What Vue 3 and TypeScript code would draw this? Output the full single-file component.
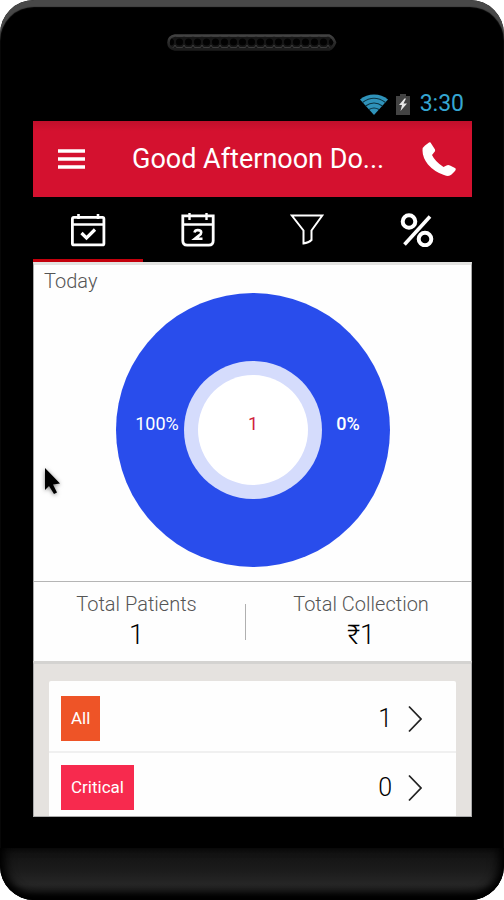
<script setup lang="ts">
import { ref } from 'vue'

interface Row {
  label: string
  count: number
  tone: string
}

const tabs = ['Today', 'Calendar', 'Filter', 'Percentage']
const active = ref(0)

const stats = [
  { label: 'Total Patients', value: '1' },
  { label: 'Total Collection', value: '₹1' },
]

const rows: Row[] = [
  { label: 'All', count: 1, tone: 'orange' },
  { label: 'Critical', count: 0, tone: 'pink' },
]
</script>

<template>
  <div class="phone">
    <div class="top">
      <svg class="speaker" viewBox="0 0 170 17" width="170" height="17" aria-hidden="true">
        <defs>
          <pattern id="mesh" x="8" y="3" width="9" height="11" patternUnits="userSpaceOnUse">
            <rect width="9" height="11" fill="#161616" />
            <circle cx="4.5" cy="5" r="3.6" fill="#020202" />
            <path d="M0 8l1.500 2.500h6L9 8" fill="none" stroke="#3c3c3c" />
          </pattern>
          <linearGradient id="rim" x1="0" y1="0" x2="0" y2="1">
            <stop offset="0" stop-color="#424242" />
            <stop offset="0.5" stop-color="#2c2c2c" />
            <stop offset="1" stop-color="#1c1c1c" />
          </linearGradient>
        </defs>
        <path d="M8 1.500h154Q166 3 168 8.500 166 14 162 15.500H8Q1.500 14.500 1.500 8.500T8 1.500z" fill="url(#mesh)" stroke="url(#rim)" stroke-width="2.600" />
      </svg>
      <div class="status">
        <svg width="28" height="21" viewBox="0 0 28 21" aria-hidden="true">
          <path d="M14 21L0 5.500Q6 .5 14 .5t14 5z" fill="#2f93ba" />
          <path d="M2.500 8.500q11.500-8.500 23 0M5.500 12q8.500-6 17 0M9 15.500q5-3 10 0" fill="none" stroke="#0c3443" stroke-width="1.100" />
        </svg>
        <svg width="14" height="21" viewBox="0 0 14 21" aria-hidden="true">
          <path d="M4 0h6v2h4v19H0V2h4z" fill="#434343" />
          <path d="M8.500 4.500L3 11h3l-1.500 6L11 9.500H7.500l2.500-5z" fill="#e8e8e8" />
        </svg>
        <span class="time">3:30</span>
      </div>
    </div>

    <main class="screen">
      <header class="bar">
        <button type="button" class="icon" aria-label="Menu">
          <svg width="27" height="20" viewBox="0 0 27 20"><path d="M0 2h27M0 10h27M0 18h27" stroke="#fff" stroke-width="3.600" /></svg>
        </button>
        <h1>Good Afternoon Do...</h1>
        <button type="button" class="icon" aria-label="Call">
          <svg width="34" height="35" viewBox="0 0 34 35">
            <path d="M8.500.5L13 7.500Q13.500 9 12 10.500L10 13Q13 19.500 21.500 25L24.500 23.500Q26 22.500 28 23.500L33 26Q34.500 27 33 29L29.500 32.500Q27 35 22 33Q12.500 30 6 22.500Q.5 15.500.5 8.500Q.5 5 3 3.500L7 .5Q8-.2 8.500.5z" fill="#fff" />
          </svg>
        </button>
      </header>

      <nav class="tabs">
        <button
          v-for="(tab, i) in tabs"
          :key="tab"
          type="button"
          :class="{ active: active === i }"
          :aria-label="tab"
          @click="active = i"
        >
          <svg v-if="i === 0" width="36" height="34" viewBox="0 0 36 34" fill="none" stroke="#fff" stroke-width="2.800">
            <rect x="2.400" y="4.400" width="31.500" height="27.500" rx="1.500" />
            <path d="M2 11.500h32M8.500 1v5M28 1v5" stroke-width="2.600" />
            <path d="M11.500 20l5 5L25 16.500" stroke-width="3.200" />
          </svg>
          <svg v-else-if="i === 1" width="34" height="34" viewBox="0 0 34 34" fill="none" stroke="#fff" stroke-width="2.800">
            <path d="M1.800 2.800h30.400v25q0 4.400-4.400 4.400H6.200q-4.400 0-4.400-4.400z" />
            <path d="M2 11.500h30M8.500 0v7M25.500 0v7" stroke-width="2.400" />
            <path d="M13.500 19.500q.5-2.400 3.300-2.400 3.400 0 3.400 2.300 0 1.500-2 3l-4.200 3.300h7.500" stroke-width="2.600" />
          </svg>
          <svg v-else-if="i === 2" width="34" height="34" viewBox="0 0 34 34" fill="none" stroke="#fff" stroke-width="2">
            <path d="M1.800 2.500h30.500L21.500 17.500V27q-3 3-8 3.500v-13z" />
          </svg>
          <svg v-else width="34" height="34" viewBox="0 0 34 34" fill="none" stroke="#fff" stroke-width="4">
            <circle cx="9" cy="8.500" r="6.300" />
            <circle cx="25" cy="26" r="6.300" />
            <path d="M30 3.500L4.500 31.500" stroke-width="3.600" />
          </svg>
        </button>
      </nav>

      <section class="chart">
        <h2>Today</h2>
        <svg class="donut" viewBox="0 0 274 274" width="274" height="274" role="img" aria-label="Patients today">
          <circle cx="137" cy="137" r="137" fill="#294dec" />
          <circle cx="137" cy="137" r="69" fill="#d5dcfc" />
          <circle cx="137" cy="137" r="55" fill="#fff" />
          <text x="41" y="137" text-anchor="middle" fill="#fff">100%</text>
          <text x="137" y="137" text-anchor="middle" fill="#d0223c">1</text>
          <text x="232" y="137" text-anchor="middle" fill="#fff" class="strong">0%</text>
        </svg>
        <svg class="pointer" width="24" height="34" viewBox="0 0 24 34" aria-hidden="true">
          <path d="M2 1v22l4-4 5 8 3-1.500-4-8 7-1z" fill="#000" />
        </svg>
      </section>

      <section class="stats">
        <div v-for="s in stats" :key="s.label" class="stat">
          <span class="name">{{ s.label }}</span>
          <span class="value">{{ s.value }}</span>
        </div>
      </section>

      <section class="lists">
        <ul>
          <li v-for="row in rows" :key="row.label">
            <a href="#">
              <span class="badge" :class="row.tone">{{ row.label }}</span>
              <span class="count">{{ row.count }}</span>
              <svg width="14" height="28" viewBox="0 0 14 28" aria-hidden="true">
                <path d="M1 1.500L13 14 1 26.500" fill="none" stroke="#222" stroke-width="1.800" />
              </svg>
            </a>
          </li>
        </ul>
      </section>
    </main>

    <div class="chin"></div>
  </div>
</template>

<style>
body {
  background: #fff;
}
</style>

<style scoped>
* {
  box-sizing: border-box;
}
.phone {
  min-height: 100vh;
  display: flex;
  flex-direction: column;
  background: #000;
  border-radius: 34px;
  overflow: hidden;
  box-shadow: inset 0 7px 1px #484848;
  font-family: Roboto, "Noto Sans", sans-serif;
  color: #222;
}
.top {
  padding: 34px 40px 4px;
  display: flex;
  flex-direction: column;
  align-items: center;
  gap: 40px;
}
.speaker {
  display: block;
}
.status {
  align-self: flex-end;
  display: flex;
  align-items: center;
  gap: 8px;
}
.time {
  margin-left: 2px;
  font-size: 23px;
  line-height: 26px;
  color: #35a6d2;
}
.screen {
  flex: 1;
  margin: 0 32px 0 33px;
  display: flex;
  flex-direction: column;
}
button {
  padding: 0;
  border: 0;
  background: none;
  cursor: pointer;
}
.bar {
  height: 76px;
  display: flex;
  align-items: center;
  padding: 0 16px 0 25px;
  background: linear-gradient(#c00f2b, #d4112f 10px);
}
.icon {
  display: flex;
}
h1 {
  flex: 1;
  margin: 0 0 0 47px;
  font-size: 27px;
  line-height: 32px;
  font-weight: 400;
  color: #fff;
  white-space: nowrap;
}
.tabs {
  display: grid;
  grid-template-columns: repeat(4, 1fr);
  height: 65px;
}
.tabs button {
  display: flex;
  align-items: center;
  justify-content: center;
  border-bottom: 3px solid transparent;
  padding-top: 4px;
}
.tabs .active {
  border-bottom-color: #c4000c;
}
.chart {
  position: relative;
  border: 1px solid #aaa;
  border-top: 3px solid #e3e3e1;
  border-bottom: 0;
  padding: 6px 10px 14px;
  background: #fefefe;
}
h2 {
  margin: 0 0 2px;
  font-size: 20px;
  line-height: 20px;
  font-weight: 300;
  color: #555;
}
.donut {
  display: block;
  margin: 0 auto;
  font-size: 18px;
}
.strong {
  font-weight: 500;
}
.pointer {
  position: absolute;
  left: 9px;
  top: 202px;
  filter: drop-shadow(0 1px 2px rgba(0, 0, 0, 0.5));
}
.stats {
  display: grid;
  grid-template-columns: 209px 1fr;
  border: solid #aaa;
  border-width: 0 1px;
  padding: 0 2px;
  background: linear-gradient(#b5b5b5 0 1px, #fefefe 1px);
}
.stat {
  position: relative;
  display: flex;
  flex-direction: column;
  align-items: center;
  padding: 11px 8px 7px 0;
}
.stat + .stat {
  padding: 11px 0 7px 8px;
}
.stat + .stat::before {
  content: "";
  position: absolute;
  left: 0;
  top: 23px;
  bottom: 21px;
  border-left: 1px solid #b0b0b0;
}
.name {
  font-size: 20px;
  line-height: 24px;
  font-weight: 300;
  color: #555;
}
.value {
  font-size: 27px;
  line-height: 38px;
  font-weight: 300;
  color: #000;
}
.lists {
  flex: 1;
  border: 1px solid #aaa;
  border-top: 3px solid #d4d3d1;
  padding: 17px 15px 0;
  background: #e5e2df;
}
ul {
  height: 100%;
  margin: 0;
  padding: 0;
  list-style: none;
  background: #fefefe;
  border-radius: 2px 2px 0 0;
}
li {
  padding: 15px 34px 10px 12px;
}
li + li {
  border-top: 2px solid #f0f0f0;
  padding: 12px 34px 6px 12px;
}
a {
  display: flex;
  align-items: center;
  gap: 16px;
  color: inherit;
  text-decoration: none;
}
.badge {
  padding: 0 10px;
  font-size: 17px;
  line-height: 45px;
  color: #fff;
}
.orange {
  background: #ee5427;
}
.pink {
  background: #f72a4e;
}
.count {
  margin-left: auto;
  font-size: 25px;
  line-height: 30px;
  font-weight: 300;
  color: #000;
}
.chin {
  height: 52px;
  margin-top: 31px;
  border-radius: 0 0 34px 34px;
  background: linear-gradient(#111, #1c1c1c 45%, #262626 70%, #1c1c1c 85%, #000);
  box-shadow: inset 0 -6px 8px #000, inset 8px 0 12px -4px #000, inset -8px 0 12px -4px #000;
}
</style>
